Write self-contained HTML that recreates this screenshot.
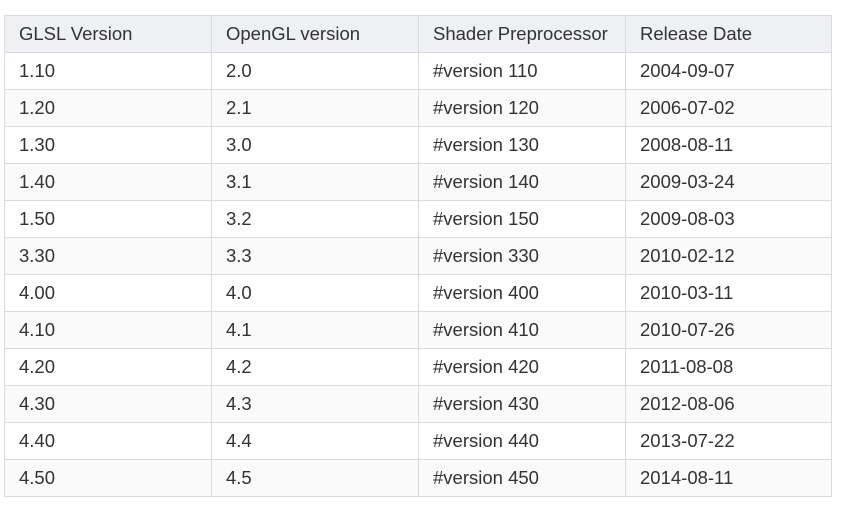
<!DOCTYPE html>
<html><head><style>
body{margin:0;background:#fff;}
table{position:absolute;left:4px;top:15px;border-collapse:collapse;font-family:"Liberation Sans","Noto Sans CJK SC",sans-serif;font-size:18.5px;color:#333;table-layout:fixed;width:827px;}
td,th{border:1px solid #d9dbe0;height:36px;padding:0 0 0 14px;text-align:left;font-weight:normal;box-sizing:content-box;overflow:hidden;white-space:nowrap;}
th{background:#eff0f4;}
tr:nth-child(odd) td{background:#fafafb;}
</style></head><body>
<table>
<colgroup><col style="width:207px"><col style="width:207px"><col style="width:207px"><col style="width:206px"></colgroup>
<tr><th>GLSL Version</th><th>OpenGL version</th><th>Shader Preprocessor</th><th>Release Date</th></tr>
<tr><td>1.10</td><td>2.0</td><td>#version 110</td><td>2004-09-07</td></tr>
<tr><td>1.20</td><td>2.1</td><td>#version 120</td><td>2006-07-02</td></tr>
<tr><td>1.30</td><td>3.0</td><td>#version 130</td><td>2008-08-11</td></tr>
<tr><td>1.40</td><td>3.1</td><td>#version 140</td><td>2009-03-24</td></tr>
<tr><td>1.50</td><td>3.2</td><td>#version 150</td><td>2009-08-03</td></tr>
<tr><td>3.30</td><td>3.3</td><td>#version 330</td><td>2010-02-12</td></tr>
<tr><td>4.00</td><td>4.0</td><td>#version 400</td><td>2010-03-11</td></tr>
<tr><td>4.10</td><td>4.1</td><td>#version 410</td><td>2010-07-26</td></tr>
<tr><td>4.20</td><td>4.2</td><td>#version 420</td><td>2011-08-08</td></tr>
<tr><td>4.30</td><td>4.3</td><td>#version 430</td><td>2012-08-06</td></tr>
<tr><td>4.40</td><td>4.4</td><td>#version 440</td><td>2013-07-22</td></tr>
<tr><td>4.50</td><td>4.5</td><td>#version 450</td><td>2014-08-11</td></tr>
</table>
</body></html>
